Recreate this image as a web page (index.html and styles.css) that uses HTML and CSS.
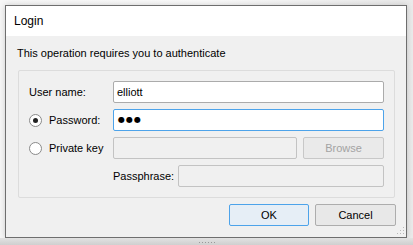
FILE: index.html
```html
<!DOCTYPE html>
<html>
<head>
<meta charset="utf-8">
<link rel="stylesheet" href="styles.css">
</head>
<body>
<div class="desk">
  <div class="window">
    <div class="titlebar">Login</div>
    <div class="content">
      <div class="intro">This operation requires you to authenticate</div>
      <div class="group">
        <div class="lbl">User name:</div>
        <div class="field">elliott</div>
        <div class="lbl"><span class="radio on"></span>Password:</div>
        <div class="field focus dots">●●●</div>
        <div class="lbl"><span class="radio"></span>Private key</div>
        <div class="pkrow"><div class="field disabled"></div><div class="btn disabled">Browse</div></div>
        <div class="pprow"><span class="pplbl">Passphrase:</span><div class="field disabled"></div></div>
      </div>
      <div class="actions">
        <div class="btn default">OK</div>
        <div class="btn">Cancel</div>
      </div>
      <div class="grip">
        <svg width="8" height="8" viewBox="0 0 8 8"><g fill="#b8b8b8"><rect x="6" y="0" width="1" height="1"/><rect x="3" y="3" width="1" height="1"/><rect x="6" y="3" width="1" height="1"/><rect x="0" y="6" width="1" height="1"/><rect x="3" y="6" width="1" height="1"/><rect x="6" y="6" width="1" height="1"/></g></svg>
      </div>
    </div>
  </div>
</div>
<div class="statusbar"><span class="sdots"></span></div>
</body>
</html>
```
FILE: styles.css
```css
html, body { margin: 0; padding: 0; }
body {
  width: 413px; height: 245px; overflow: hidden;
  background: #f4f4f4;
  font-family: "Segoe UI", "Liberation Sans", Arial, sans-serif;
  font-size: 11px; color: #000;
}
.desk {
  padding: 5px 6px 0 5px;
  height: 233px;
  background: linear-gradient(90deg, #f7f7f7 0%, #fafafa 50%, #eaeaea 100%);
}
.window {
  width: 400px; height: 231px;
  border: 1px solid #6e6e6e;
  background: #f0f0f0;
  box-shadow: 0 0 6px rgba(0,0,0,0.18);
  display: flex; flex-direction: column;
}
.titlebar {
  height: 30px; background: #fff;
  padding-left: 8px;
  display: flex; align-items: center;
  font-size: 12px;
}
.content {
  flex: 1; position: relative;
  padding: 10px 11px 0 12px;
}
.intro { height: 15px; line-height: 15px; margin-left: -1px; }
.group {
  margin-top: 9px;
  border: 1px solid #dcdcdc; border-radius: 2px;
  padding: 10px 10px 10px 10px;
  display: grid;
  grid-template-columns: 84px 1fr;
  row-gap: 6px;
}
.lbl { display: flex; align-items: center; height: 22px; }
.field {
  height: 20px; border: 1px solid #ababab; border-radius: 2px; background: #fff;
  padding-left: 3px; line-height: 20px;
}
.field.focus { border-color: #4da3ea; }
.field.dots { font-size: 8px; letter-spacing: 1px; font-family: "DejaVu Sans", sans-serif; line-height: 20px; padding-left: 4px; }
.field.disabled { background: #f0f0f0; border-color: #c3c3c3; }
.radio {
  width: 11px; height: 11px; border: 1px solid #8a8a8a; border-radius: 50%;
  background: #fff; margin-right: 7px; position: relative;
}
.radio.on::after {
  content: ""; position: absolute; left: 3px; top: 3px; width: 5px; height: 5px;
  border-radius: 50%; background: #222;
}
.pkrow { display: flex; gap: 6px; }
.pkrow .field { flex: 1; }
.pprow { grid-column: 1 / span 2; display: flex; align-items: center; padding-left: 84px; }
.pplbl { width: 65px; }
.pprow .field { flex: 1; }
.btn {
  height: 20px; border: 1px solid #adadad; border-radius: 2px; background: #e8e8e8;
  display: flex; align-items: center; justify-content: center;
}
.pkrow .btn { width: 79px; }
.btn.disabled { color: #a3a3a3; border-color: #c8c8c8; background: #eaeaea; }
.actions { display: flex; justify-content: flex-end; gap: 6px; margin-top: 6px; margin-right: -1px; }
.actions .btn { width: 78px; }
.actions .btn + .btn { width: 79px; }
.btn.default { border-color: #4da3ea; background: #e6eef6; }
.grip { position: absolute; right: 1px; bottom: 2px; line-height: 0; }
.statusbar {
  height: 7px; background: linear-gradient(#e2e2e2, #cfcfcf);
  display: flex; justify-content: center; align-items: center;
}
.sdots {
  width: 16px; height: 1px; margin-top: 2px;
  background: repeating-linear-gradient(90deg, #999 0 1px, transparent 1px 3px);
}
```
